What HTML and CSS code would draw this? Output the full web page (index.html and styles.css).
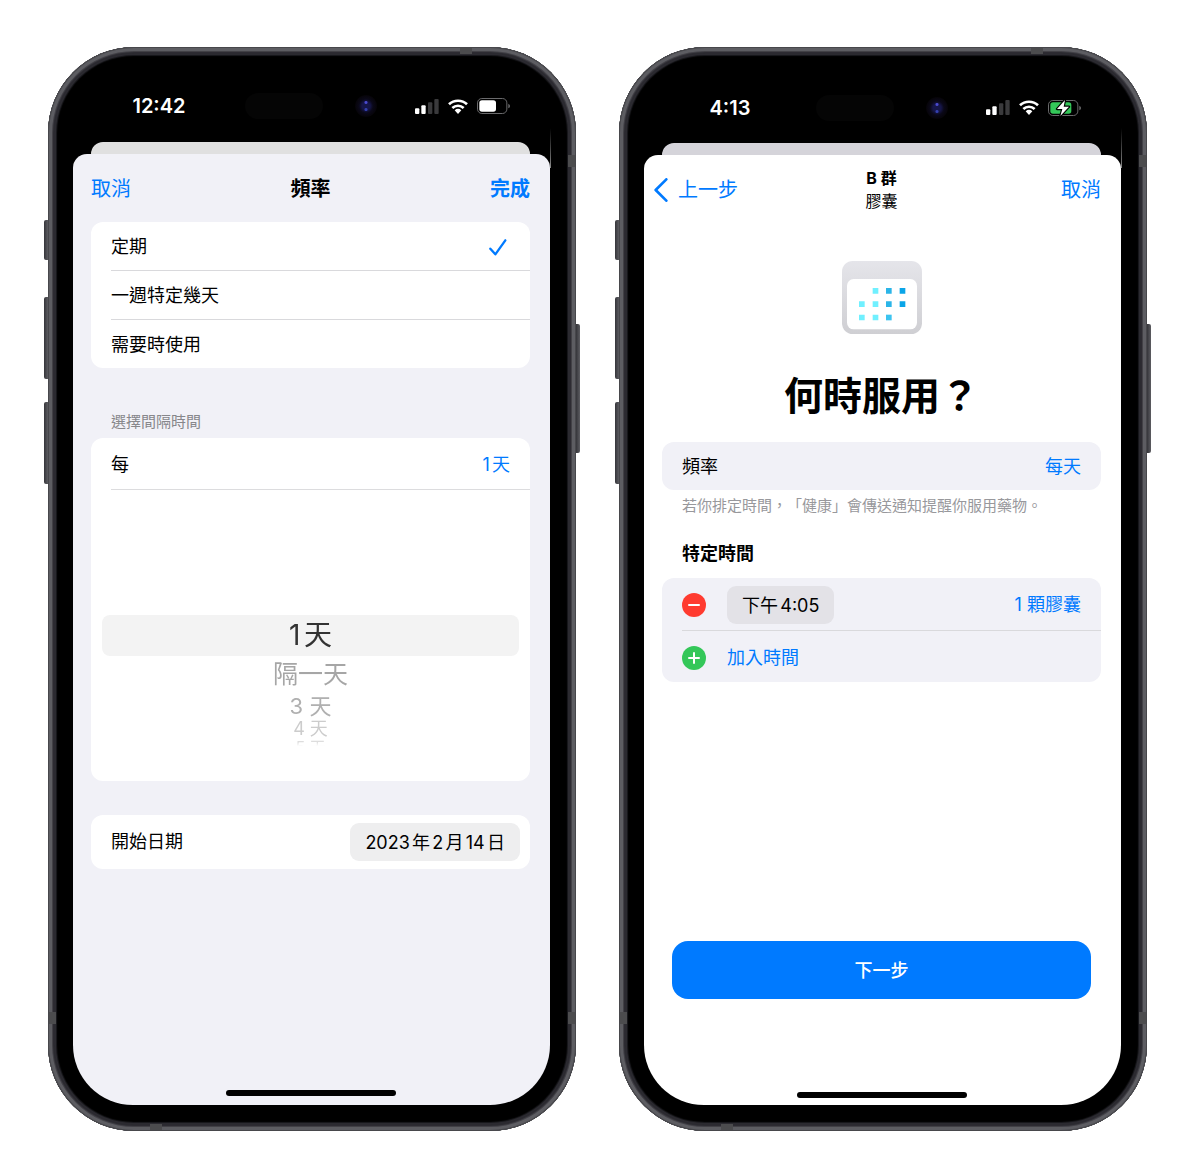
FILE: index.html
```html
<!DOCTYPE html>
<html lang="zh-Hant-TW">
<head>
<meta charset="utf-8">
<meta name="viewport" content="width=device-width, initial-scale=1">
<title>用藥頻率</title>
<link rel="stylesheet" href="styles.css">
</head>
<body>
<svg width="0" height="0" class="sprite" aria-hidden="true">
  <symbol id="signal" viewBox="0 0 72 45">
    <rect x="0" y="28" width="13" height="17" rx="3" fill="#fff"/>
    <rect x="19" y="19" width="13" height="26" rx="3" fill="#fff"/>
    <rect x="39" y="10" width="13" height="35" rx="3" fill="#3a3a3c"/>
    <rect x="58" y="0" width="13" height="45" rx="3" fill="#3a3a3c"/>
  </symbol>
  <symbol id="wifi" viewBox="0 0 60 45">
    <g fill="none" stroke="#fff" stroke-width="8">
      <path d="M3 16A39 39 0 0 1 57 16"/>
      <path d="M13 27A25 25 0 0 1 47 27"/>
    </g>
    <path d="M20 34A15 15 0 0 1 40 34L30 45Z" fill="#fff"/>
  </symbol>
</svg>

<main class="stage">
  <section class="phone">
    <i class="key key-action"></i><i class="key key-up"></i><i class="key key-down"></i><i class="key key-power"></i>
    <i class="band band-top"></i><i class="band band-right"></i><i class="band band-left-low"></i><i class="band band-right-low"></i><i class="band band-bottom"></i>
    <div class="screen">
      <header class="status">
        <time class="clock">12:42</time>
        <span class="island"></span>
        <span class="camera"></span>
        <div class="indicators">
          <svg width="24" height="15"><use href="#signal"/></svg>
          <svg width="20" height="15"><use href="#wifi"/></svg>
          <svg width="33" height="16" viewBox="0 0 99 48">
            <rect x="1.5" y="1.5" width="88" height="45" rx="13" fill="none" stroke="#6a6a6c" stroke-width="3"/>
            <rect x="7" y="7" width="50" height="34" rx="8" fill="#fff"/>
            <path d="M94 17q5 2 5 7t-5 7z" fill="#6a6a6c"/>
          </svg>
        </div>
      </header>
      <div class="sheet-behind"></div>
      <div class="sheet sheet-gray">
        <nav class="nav">
          <button class="link">取消</button>
          <h1 class="nav-title">頻率</h1>
          <button class="link link-strong">完成</button>
        </nav>

        <div class="card card-white" role="radiogroup" aria-label="頻率">
          <label class="row">定期<input class="check" type="radio" name="mode" checked>
            <svg class="tick" width="18" height="17" viewBox="0 0 54 51"><path d="M4 29L19 46L49 4" fill="none" stroke="#007aff" stroke-width="7" stroke-linecap="round" stroke-linejoin="round"/></svg>
          </label>
          <label class="row">一週特定幾天<input class="check" type="radio" name="mode"></label>
          <label class="row">需要時使用<input class="check" type="radio" name="mode"></label>
        </div>

        <h2 class="caption">選擇間隔時間</h2>
        <div class="card card-white">
          <div class="row row-every"><span>每</span><button class="link value">1天</button></div>
          <div class="wheel" role="radiogroup" aria-label="選擇間隔時間">
            <label class="wheel-item wheel-on"><input class="check" type="radio" name="every" checked>1天</label>
            <label class="wheel-item wheel-2"><input class="check" type="radio" name="every">隔一天</label>
            <label class="wheel-item wheel-3"><input class="check" type="radio" name="every">3 天</label>
            <label class="wheel-item wheel-4"><input class="check" type="radio" name="every">4 天</label>
            <label class="wheel-item wheel-5"><input class="check" type="radio" name="every">5 天</label>
          </div>
        </div>

        <div class="card card-white card-date">
          <div class="row row-tall"><span>開始日期</span><button class="pill">2023年2月14日</button></div>
        </div>
        <div class="home"></div>
      </div>
    </div>
  </section>

  <section class="phone">
    <i class="key key-action"></i><i class="key key-up"></i><i class="key key-down"></i><i class="key key-power"></i>
    <i class="band band-top"></i><i class="band band-right"></i><i class="band band-left-low"></i><i class="band band-right-low"></i><i class="band band-bottom"></i>
    <div class="screen">
      <header class="status status-low">
        <time class="clock">4:13</time>
        <span class="island"></span>
        <span class="camera"></span>
        <div class="indicators">
          <svg width="24" height="15"><use href="#signal"/></svg>
          <svg width="20" height="15"><use href="#wifi"/></svg>
          <svg width="33" height="16" viewBox="0 0 99 48">
            <rect x="1.5" y="1.5" width="88" height="45" rx="13" fill="none" stroke="#6a6a6c" stroke-width="3"/>
            <rect x="7" y="7" width="63" height="34" rx="8" fill="#34c759"/>
            <path d="M94 17q5 2 5 7t-5 7z" fill="#6a6a6c"/>
            <path d="M51 0L27 27H43L37 48L63 20H47Z" fill="#fff" stroke="#000" stroke-width="7" stroke-linejoin="round" paint-order="stroke"/>
          </svg>
        </div>
      </header>
      <div class="sheet-behind sheet-behind-cool"></div>
      <div class="sheet sheet-white">
        <nav class="nav">
          <button class="link back">
            <svg width="14" height="24" viewBox="0 0 42 72"><path d="M37 4L5 36L37 68" fill="none" stroke="#007aff" stroke-width="8" stroke-linecap="round" stroke-linejoin="round"/></svg>
            上一步</button>
          <div class="nav-stack"><strong>B 群</strong><span>膠囊</span></div>
          <button class="link">取消</button>
        </nav>

        <div class="hero">
          <svg width="80" height="73" viewBox="0 0 240 219" aria-hidden="true">
            <defs>
              <linearGradient id="shell" x1="0" y1="0" x2="0" y2="1"><stop offset="0" stop-color="#e5e5ea"/><stop offset="1" stop-color="#cfcfd3"/></linearGradient>
            </defs>
            <rect width="240" height="219" rx="32" fill="url(#shell)"/>
            <rect x="15" y="54" width="210" height="151" rx="20" fill="#fff"/>
            <path fill="#70f0ff" d="M92 81h17v17h-17zM51 121h17v17h-17zM92 121h17v17h-17zM51 161h17v17h-17zM92 161h17v17h-17z"/>
            <path fill="#2bb5e8" d="M132 81h17v17h-17zM132 121h17v17h-17z"/>
            <path fill="#3cc4f0" d="M132 161h17v17h-17z"/>
            <path fill="#0aa5e8" d="M173 81h17v17h-17zM173 121h17v17h-17z"/>
          </svg>
          <h1 class="hero-title">何時服用？</h1>
        </div>

        <div class="card card-gray">
          <div class="row"><span>頻率</span><button class="link value">每天</button></div>
        </div>
        <p class="note">若你排定時間，「健康」會傳送通知提醒你服用藥物。</p>

        <h2 class="heading">特定時間</h2>
        <div class="card card-gray">
          <div class="row row-time">
            <button class="dot" aria-label="移除時間"><svg width="24" height="24" viewBox="0 0 24 24"><circle cx="12" cy="12" r="12" fill="#ff3b30"/><path d="M7 12H17" stroke="#fff" stroke-width="2" stroke-linecap="round"/></svg></button>
            <button class="pill pill-dark">下午4:05</button>
            <button class="link value">1 顆膠囊</button>
          </div>
          <div class="row row-time">
            <button class="dot" aria-label="新增"><svg width="24" height="24" viewBox="0 0 24 24"><circle cx="12" cy="12" r="12" fill="#34c759"/><path d="M7 12H17M12 7V17" stroke="#fff" stroke-width="2" stroke-linecap="round"/></svg></button>
            <button class="link value-start">加入時間</button>
          </div>
        </div>

        <button class="next">下一步</button>
        <div class="home home-low"></div>
      </div>
    </div>
  </section>
</main>
</body>
</html>
```
FILE: styles.css
```css
* { box-sizing: border-box; }

body {
  margin: 0;
  background: #fff;
  color: #000;
  font-family: Inter, "Noto Sans CJK TC", sans-serif;
  font-size: 18px;
  line-height: 24px;
  text-spacing-trim: space-all;
  text-autospace: normal;
}

h1, h2, p { margin: 0; }

button {
  border: 0;
  padding: 0;
  background: none;
  font: inherit;
  color: inherit;
  cursor: pointer;
}

svg { display: block; }
.sprite { position: absolute; }

.stage {
  display: grid;
  grid-template-columns: 1fr 1fr;
  gap: 43px;
  min-height: 100vh;
  padding: 47px 53px 41px 48px;
}

/* Device body */
.phone {
  position: relative;
  display: flex;
  padding: 25px 26px 26px 25px;
  border-radius: 86px;
  background: #000;
  box-shadow:
    inset 0 0 0 1px #47474b,
    inset 0 0 0 4px #5d5d62,
    inset 0 0 1px 5px #45444a,
    inset 0 0 0 8px #2b2a30,
    inset 0 0 1px 9px #1a1a1e;
}

.key {
  position: absolute;
  left: -4px;
  width: 4px;
  border-radius: 2px 0 0 2px;
  background: linear-gradient(90deg, #35353a, #5c5c61);
}
.key-action { top: 173px; height: 40px; }
.key-up { top: 250px; height: 82px; }
.key-down { top: 355px; height: 82px; }
.key-power {
  top: 277px;
  left: auto;
  right: -4px;
  height: 129px;
  border-radius: 0 2px 2px 0;
}

.band { position: absolute; width: 7px; height: 12px; background: #4c4c4e; }
.band-top { top: 1px; left: 412px; width: 12px; height: 6px; }
.band-right { top: 108px; right: 1px; }
.band-left-low { bottom: 107px; left: 1px; }
.band-right-low { bottom: 107px; right: 1px; }
.band-bottom { bottom: 1px; left: 102px; width: 12px; height: 6px; }

.screen {
  position: relative;
  flex: 1;
  display: flex;
  flex-direction: column;
  min-width: 0;
}
.screen::after {
  content: "";
  position: absolute;
  top: 56px;
  right: -1px;
  width: 1px;
  height: 40px;
  background: linear-gradient(#000, #8a8a8a);
}

/* Status bar */
.status {
  display: flex;
  align-items: center;
  height: 70px;
  padding: 0 40px 2px 0;
}
.status-low { height: 71px; padding-bottom: 0; }
.clock {
  width: 172px;
  color: #fff;
  font-size: 20px;
  font-weight: 600;
  text-align: center;
}
.island {
  width: 78px;
  height: 26px;
  border-radius: 13px;
  background: #050505;
}
.camera {
  width: 22px;
  height: 22px;
  margin-left: 32px;
  border-radius: 50%;
  background: radial-gradient(circle at 50% 34%, #4a4ad0 0 1px, transparent 2px),
    radial-gradient(circle at 50% 66%, #3440b0 0 1px, transparent 2px),
    radial-gradient(circle, #16164a 0 4px, #0a0818 7px, #060408 11px);
}
.indicators {
  display: flex;
  align-items: center;
  gap: 9px;
  margin-left: auto;
}

/* Sheets */
.sheet-behind {
  height: 12px;
  margin: 0 20px 0 18px;
  border-radius: 12px 12px 0 0;
  background: #e0e0e0;
}
.sheet-behind-cool { background: #d5d4da; }
.sheet {
  flex: 1;
  display: flex;
  flex-direction: column;
  padding: 0 20px 0 18px;
  border-radius: 14px 14px 60px 60px;
}
.sheet-gray { background: #f1f1f7; }
.sheet-white { background: #fff; }

.nav {
  display: grid;
  grid-template-columns: 1fr auto 1fr;
  align-items: center;
  height: 68px;
  padding-top: 2px;
  font-size: 20px;
}
.nav .link:first-child { justify-self: start; }
.nav .link:last-child { justify-self: end; }
.nav-title { font-size: 20px; font-weight: 700; line-height: 24px; }
.nav-stack {
  display: flex;
  flex-direction: column;
  align-items: center;
  font-size: 16px;
  line-height: 23px;
}
.link { color: #007aff; }
.link-strong { font-weight: 700; }
.back { display: flex; align-items: center; gap: 10px; margin-left: -8px; }

/* Cards and rows */
.card { border-radius: 12px; }
.card-white { background: #fff; }
.card-gray { background: #f1f1f7; }
.card-date { margin-top: 34px; }
.row {
  display: flex;
  align-items: center;
  min-height: 48px;
  margin-left: 20px;
  padding: 2px 20px 0 0;
}
.row + .row { min-height: 49px; border-top: 1px solid #d9d9dc; }
.row-every { min-height: 52px; border-bottom: 1px solid #dcdcde; }
.row-tall { min-height: 54px; padding: 0 10px 0 0; }
.row-time, .row + .row-time { min-height: 52px; }
.value, .row-tall .pill { margin-left: auto; }
.value-start { margin-left: 21px; }
.check {
  appearance: none;
  width: 0;
  height: 0;
  margin: 0;
}
.tick { margin-left: auto; margin-right: 3px; }

.caption {
  padding: 42px 20px 4px;
  color: #87878b;
  font-size: 15px;
  font-weight: 400;
}

/* Interval wheel */
.wheel {
  display: flex;
  flex-direction: column;
  padding: 125px 11px 25px;
  text-align: center;
  mask-image: linear-gradient(#000 252px, transparent 256px);
}
.wheel-item { display: block; }
.wheel-on {
  border-radius: 8px;
  background: #f3f3f3;
  color: #333;
  font-size: 28px;
  line-height: 41px;
}
.wheel-2 { color: #a6a6a6; font-size: 25px; line-height: 36px; }
.wheel-3 { color: #b0b0b0; font-size: 22px; line-height: 28px; }
.wheel-4 { color: #cccccc; font-size: 18px; line-height: 18px; }
.wheel-5 { color: #dddddd; font-size: 16px; line-height: 18px; }

.pill {
  height: 38px;
  padding: 2px 15px 0;
  border-radius: 9px;
  background: #eeeeef;
}
.pill-dark { margin-left: 21px; background: #e3e2e7; }
.dot { width: 24px; height: 24px; }

/* Schedule step */
.hero {
  display: flex;
  flex-direction: column;
  align-items: center;
  gap: 38px;
  padding: 38px 0 22px;
}
.hero-title { font-size: 39px; font-weight: 700; line-height: 48px; }
.note {
  padding: 4px 20px 0;
  color: #98989c;
  font-size: 15px;
}
.heading {
  padding: 24px 20px 12px;
  font-size: 18px;
  font-weight: 700;
}
.next {
  height: 58px;
  margin: auto 10px 0;
  padding-top: 2px;
  border-radius: 16px;
  background: #007aff;
  color: #fff;
  font-weight: 500;
}

.home {
  align-self: center;
  width: 170px;
  height: 6px;
  margin: auto 0 9px;
  border-radius: 3px;
  background: #000;
}
.home-low { margin: 93px 0 7px; }

@media (max-width: 900px) {
  .stage { grid-template-columns: 1fr; }
}
```
